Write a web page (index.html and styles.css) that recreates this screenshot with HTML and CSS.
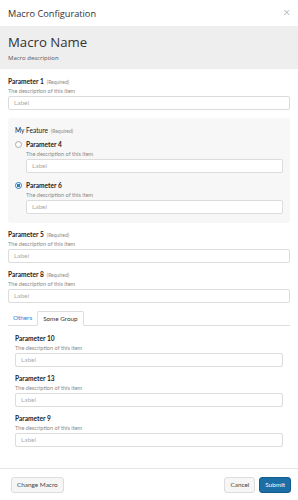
FILE: index.html
```html
<!DOCTYPE html>
<html>
<head>
<meta charset="utf-8">
<link rel="stylesheet" href="styles.css">
</head>
<body>
<div class="dialog">
  <div class="header">
    <span class="title">Macro Configuration</span>
    <span class="close">&#215;</span>
  </div>
  <div class="band">
    <div class="macro-name">Macro Name</div>
    <div class="macro-desc">Macro description</div>
  </div>
  <div class="body">
    <div class="field">
      <div class="label">Parameter 1 <span class="req">(Required)</span></div>
      <div class="desc">The description of this item</div>
      <div class="input">Label</div>
    </div>

    <div class="feature">
      <div class="label feature-title">My Feature <span class="req">(Required)</span></div>
      <div class="option">
        <span class="radio"></span>
        <div class="option-body">
          <div class="label">Parameter 4</div>
          <div class="desc">The description of this item</div>
          <div class="input">Label</div>
        </div>
      </div>
      <div class="option">
        <span class="radio checked"></span>
        <div class="option-body">
          <div class="label">Parameter 6</div>
          <div class="desc">The description of this item</div>
          <div class="input">Label</div>
        </div>
      </div>
    </div>

    <div class="field">
      <div class="label">Parameter 5 <span class="req">(Required)</span></div>
      <div class="desc">The description of this item</div>
      <div class="input">Label</div>
    </div>
    <div class="field">
      <div class="label">Parameter 8 <span class="req">(Required)</span></div>
      <div class="desc">The description of this item</div>
      <div class="input">Label</div>
    </div>

    <div class="tabs">
      <span class="tab link">Others</span>
      <span class="tab active">Some Group</span>
    </div>
    <div class="tab-content">
      <div class="field">
        <div class="label">Parameter 10</div>
        <div class="desc">The description of this item</div>
        <div class="input">Label</div>
      </div>
      <div class="field">
        <div class="label">Parameter 13</div>
        <div class="desc">The description of this item</div>
        <div class="input">Label</div>
      </div>
      <div class="field">
        <div class="label">Parameter 9</div>
        <div class="desc">The description of this item</div>
        <div class="input">Label</div>
      </div>
    </div>
  </div>
  <div class="footer">
    <span class="btn">Change Macro</span>
    <span class="spacer"></span>
    <span class="btn">Cancel</span>
    <span class="btn primary">Submit</span>
  </div>
</div>
</body>
</html>
```

FILE: styles.css
```css
* { box-sizing: border-box; }
html, body { margin: 0; padding: 0; background: #fff; }
body { font-family: Lato, "Open Sans", sans-serif; color: #333; }

.dialog {
  width: 298px;
  height: 500px;
  display: flex;
  flex-direction: column;
  overflow: hidden;
}

.header {
  height: 26px;
  flex: none;
  display: flex;
  align-items: center;
  justify-content: space-between;
  padding: 0 8px;
  font-family: "Open Sans", sans-serif;
}
.title { font-size: 9.2px; color: #333; }
.close { font-size: 12px; color: #9a9a9a; line-height: 1; font-weight: 300; }

.band {
  height: 43px;
  flex: none;
  background: #eeeeee;
  padding: 7px 8px 0;
  font-family: "Open Sans", sans-serif;
}
.macro-name { font-size: 13.2px; line-height: 19px; color: #333; }
.macro-desc { font-size: 6px; line-height: 10px; color: #555; margin-top: 1px; }

.body {
  flex: 1;
  padding: 7px 8px 0;
  overflow: hidden;
}

.field { margin-bottom: 6px; }
.label {
  height: 10px;
  display: flex;
  align-items: baseline;
  gap: 3px;
  font-size: 6.6px;
  line-height: 10px;
  font-weight: 700;
  color: #222;
  white-space: nowrap;
}
.req { font-size: 5px; line-height: 10px; font-weight: 400; color: #888; }
.desc { height: 9px; font-size: 5.6px; line-height: 9px; color: #8a8a8a; white-space: nowrap; }
.input {
  margin-top: 1px;
  height: 14px;
  border: 1px solid #dcdcdc;
  border-radius: 2px;
  background: #fff;
  font-size: 6.4px;
  line-height: 12px;
  padding: 0 5px;
  color: #aaaaaa;
}

.feature {
  background: #f7f7f7;
  border-radius: 3px;
  padding: 7px 7px 9px;
  margin: 8px 0 6px;
}
.feature-title { font-weight: 400; margin-bottom: 4px; }
.option { display: flex; gap: 4px; }
.option + .option { margin-top: 7px; }
.option-body { flex: 1; }
.radio {
  flex: none;
  width: 7px;
  height: 7px;
  margin-top: 1.5px;
  border: 1px solid #aaa;
  border-radius: 50%;
  background: #fff;
}
.radio.checked {
  border-color: #2a7fc0;
  background: radial-gradient(circle, #2a7fc0 0 1.6px, #fff 2px);
}

.tabs {
  display: flex;
  align-items: stretch;
  height: 15px;
  border-bottom: 1px solid #ddd;
  margin-top: 8px;
}
.tab {
  font-size: 6.3px;
  line-height: 14px;
  padding: 0 5px;
}
.tab.link { color: #1a84d6; }
.tab.active {
  border: 1px solid #ddd;
  border-bottom-color: #fff;
  border-radius: 2px 2px 0 0;
  margin-bottom: -1px;
  color: #333;
  background: #fff;
}

.tab-content { padding: 7px 7px 0; }

.footer {
  height: 32px;
  flex: none;
  border-top: 1px solid #e5e5e5;
  display: flex;
  align-items: center;
  gap: 4px;
  padding: 0 7px 0 11px;
}
.spacer { flex: 1; }
.btn {
  height: 16px;
  padding: 0 5px;
  font-size: 6.4px;
  line-height: 14px;
  border: 1px solid #ddd;
  border-radius: 3px;
  background: #f6f6f6;
  color: #444;
}
.btn.primary {
  background: #1c6ea6;
  border-color: #155c8c;
  color: #fff;
}
```
